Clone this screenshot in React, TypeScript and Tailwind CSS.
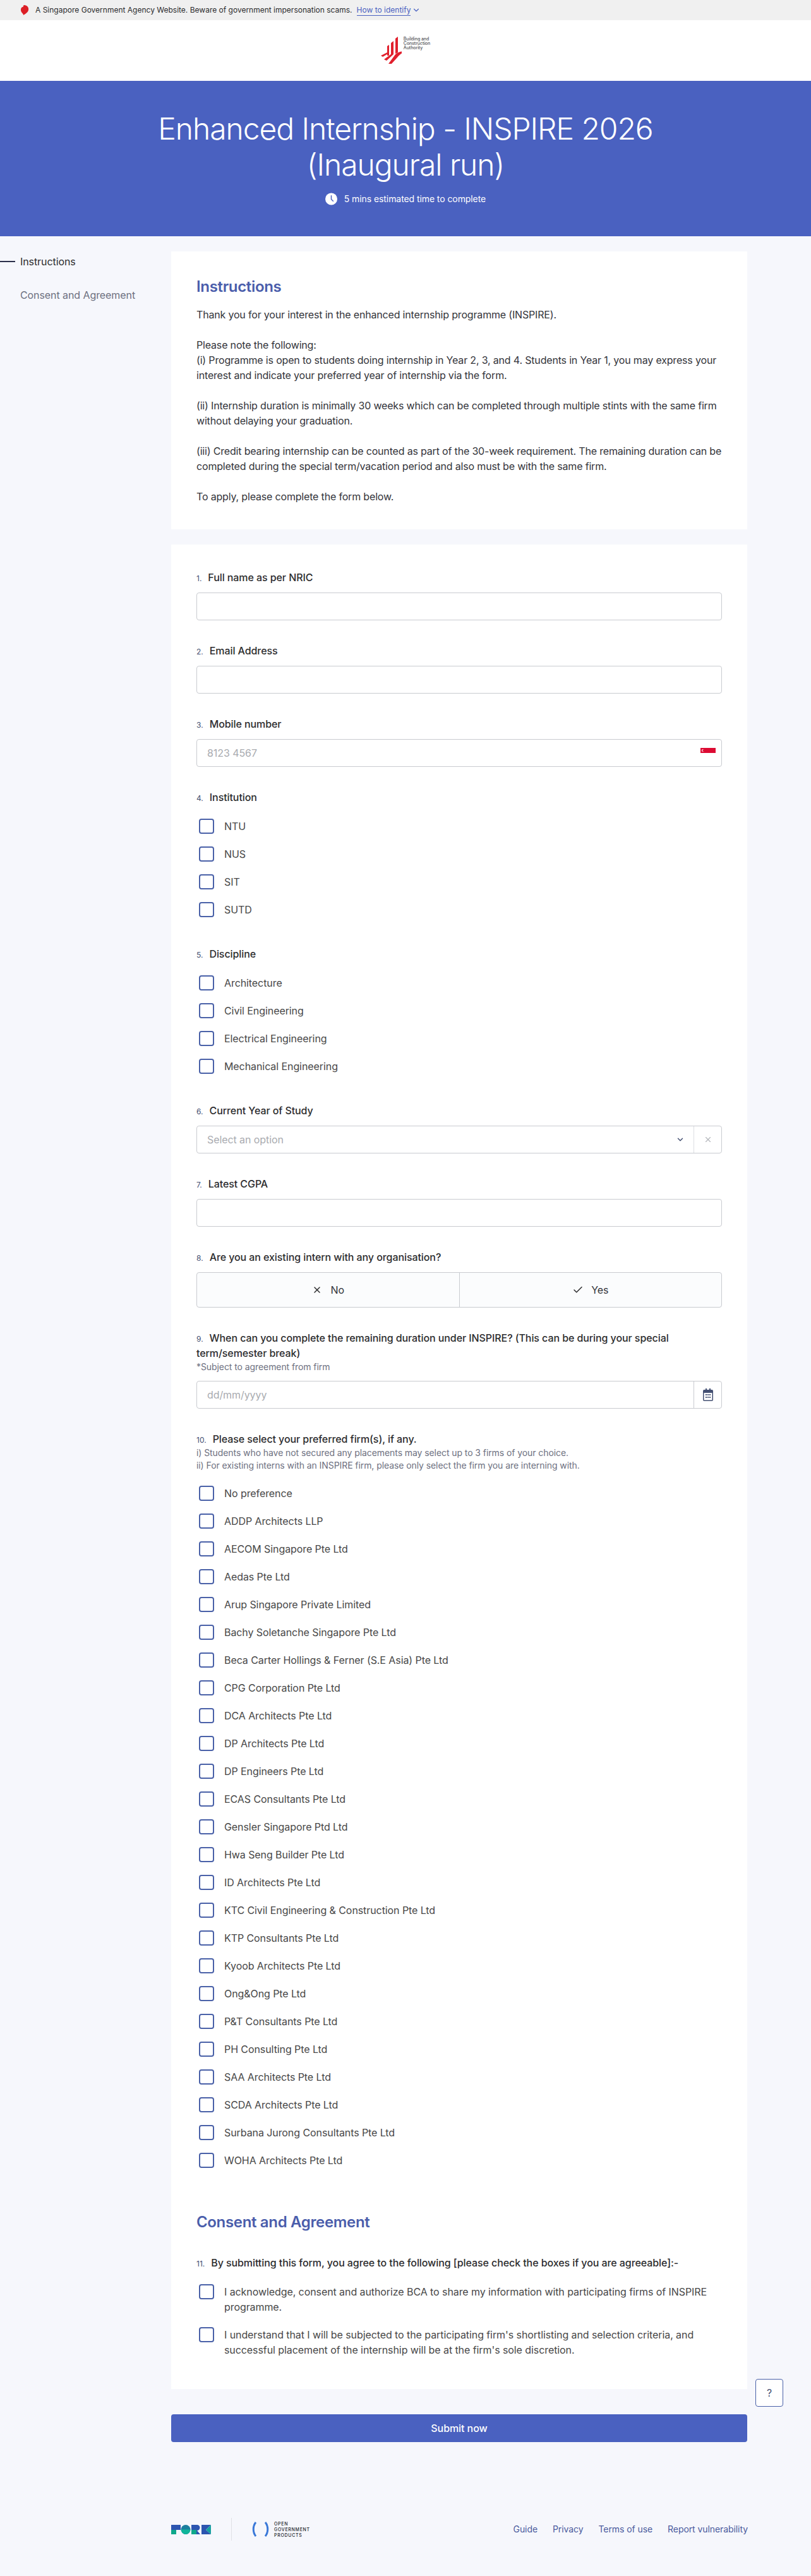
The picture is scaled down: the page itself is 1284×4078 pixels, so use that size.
import { Check, ChevronDown, X } from 'lucide-react'

const institutions = ['NTU', 'NUS', 'SIT', 'SUTD']
const disciplines = ['Architecture', 'Civil Engineering', 'Electrical Engineering', 'Mechanical Engineering']
const firms = [
  'No preference',
  'ADDP Architects LLP',
  'AECOM Singapore Pte Ltd',
  'Aedas Pte Ltd',
  'Arup Singapore Private Limited',
  'Bachy Soletanche Singapore Pte Ltd',
  'Beca Carter Hollings & Ferner (S.E Asia) Pte Ltd',
  'CPG Corporation Pte Ltd',
  'DCA Architects Pte Ltd',
  'DP Architects Pte Ltd',
  'DP Engineers Pte Ltd',
  'ECAS Consultants Pte Ltd',
  'Gensler Singapore Ptd Ltd',
  'Hwa Seng Builder Pte Ltd',
  'ID Architects Pte Ltd',
  'KTC Civil Engineering & Construction Pte Ltd',
  'KTP Consultants Pte Ltd',
  'Kyoob Architects Pte Ltd',
  'Ong&Ong Pte Ltd',
  'P&T Consultants Pte Ltd',
  'PH Consulting Pte Ltd',
  'SAA Architects Pte Ltd',
  'SCDA Architects Pte Ltd',
  'Surbana Jurong Consultants Pte Ltd',
  'WOHA Architects Pte Ltd',
]

const Label = ({ n, children }: { n: number; children: React.ReactNode }) => (
  <div className="text-base leading-6 font-medium text-[#2c2c2e]">
    <span className="mr-[10px] text-xs font-normal tracking-normal text-[#445072]">{n}.</span>
    {children}
  </div>
)

const Box = () => <span className="h-6 w-6 shrink-0 rounded-[4px] border-2 border-[#4a61a8] bg-white" />

const CheckRow = ({ text }: { text: string }) => (
  <div className="flex h-11 items-center gap-4 pl-1 text-base text-[#474747]">
    <Box />
    <span>{text}</span>
  </div>
)

const TextInput = () => <div className="h-11 rounded-[4px] border border-[#c9cbd0] bg-white" />

const BcaLogo = () => (
  <div className="flex items-start">
    <svg width="33" height="44" viewBox="0 0 33 44" className="-mt-[1px]">
      <path d="M10 16 L13 14 V31 H10 Z M16 11 L20 8 V29 H16 Z M23 4 L27 1 V26 L23 28 Z" fill="#e1202d" />
      <path d="M0 31 L10 26 L13 27 L3 33 Z M5 37 L17 28 L20 29 L9 39 Z" fill="#e1202d" />
      <path d="M12 44 L23 29 C26 26 32 24 41 23 C33 27 29 30 26 34 L16 45 Z" fill="#e1202d" />
    </svg>
    <div className="mt-[1px] ml-[3px] text-[7px] leading-[6.8px] font-medium text-[#55565a]">
      <div>Building and</div>
      <div>Construction</div>
      <div>Authority</div>
    </div>
  </div>
)

const FormLogo = () => (
  <svg width="63" height="15" viewBox="0 0 63 15" aria-label="Form">
    <rect x="0" y="0" width="15" height="8" fill="#2c55b0" />
    <rect x="0" y="8" width="8" height="7" fill="#0fa88b" />
    <circle cx="23" cy="7.5" r="7.5" fill="#1b7f9e" />
    <path d="M15.5 7.5 H30.5 A7.5 7.5 0 0 1 15.5 7.5 Z" fill="#0fb59a" />
    <path d="M32 0 H41 A4.5 4.5 0 0 1 41 9 L46 15 H32 Z" fill="#2c55b0" />
    <path d="M32 8 H40 V15 H32 Z" fill="#0fa88b" />
    <path d="M48 0 L63 0 L55 8 L63 15 H48 Z" fill="#2c55b0" />
    <path d="M63 0 V15 L55 8 Z" fill="#17a2a0" />
  </svg>
)

const App = () => {
  return (
    <div className="relative min-h-[4078px] bg-[#f6f7fc] font-['Inter',sans-serif] tracking-[-0.005em] text-[#2c2c2e]">
      <div className="flex h-8 items-center bg-[#f0f0f0] pl-8 text-xs tracking-normal text-[#2c2c2e]">
        <svg width="14" height="16" viewBox="0 0 14 16" className="mr-[10px]">
          <path d="M6 0 C11 0 14 4 13 8 C12 12 8 14 5 16 C5 13 1 12 1 8 C1 5 2 3 5 3 C4 2 5 1 6 0 Z" fill="#dc1f26" />
        </svg>
        <span>A Singapore Government Agency Website. Beware of government impersonation scams.</span>
        <a className="ml-[7px] border-b border-[#4a61c0] leading-[17px] text-[#4a61c0]">How to identify</a>
        <ChevronDown size={14} strokeWidth={2} className="ml-[2px] text-[#4a61c0]" />
      </div>

      <div className="flex h-24 justify-center bg-white pt-[26px]">
        <BcaLogo />
      </div>

      <div className="h-[246px] bg-[#4a61c0] pt-[47px] text-center text-white">
        <h1 className="mx-auto w-[800px] text-[48px] leading-[57px] font-light tracking-[-0.022em]">
          Enhanced Internship - INSPIRE 2026 (Inaugural run)
        </h1>
        <div className="mt-4 flex items-center justify-center gap-[11px] text-sm leading-5">
          <svg width="19" height="20" viewBox="0 0 20 20">
            <circle cx="10" cy="10" r="10" fill="#fff" />
            <path d="M10 4 V10.5 L13.5 14" stroke="#4a61c0" strokeWidth="1.6" fill="none" />
          </svg>
          <span>5 mins estimated time to complete</span>
        </div>
      </div>

      <div className="flex items-start pt-6">
        <div className="w-[271px] shrink-0">
          <div className="mt-[4px] flex items-center gap-2 text-base leading-6 text-[#2c2c2e]">
            <span className="h-[2px] w-6 bg-[#2b2f4a]" />
            Instructions
          </div>
          <div className="mt-[29px] pl-8 text-base leading-6 text-[#6d7080]">Consent and Agreement</div>
        </div>

        <div className="w-[912px] shrink-0">
          <section className="bg-white p-10 text-base leading-6 tracking-[-0.011em] text-[#33343a]">
            <h2 className="mb-4 text-2xl leading-8 font-semibold tracking-[-0.014em] text-[#4a5dab]">Instructions</h2>
            <p>Thank you for your interest in the enhanced internship programme (INSPIRE).</p>
            <br />
            <p>Please note the following:</p>
            <p>(i) Programme is open to students doing internship in Year 2, 3, and 4. Students in Year 1, you may express your interest and indicate your preferred year of internship via the form.</p>
            <br />
            <p>(ii) Internship duration is minimally 30 weeks which can be completed through multiple stints with the same firm without delaying your graduation.</p>
            <br />
            <p>(iii) Credit bearing internship can be counted as part of the 30-week requirement. The remaining duration can be completed during the special term/vacation period and also must be with the same firm.</p>
            <br />
            <p>To apply, please complete the form below.</p>
          </section>

          <section className="mt-6 flex flex-col bg-white p-10">
            <div className="mb-9">
              <Label n={1}>Full name as per NRIC</Label>
              <div className="mt-3"><TextInput /></div>
            </div>
            <div className="mb-9">
              <Label n={2}>Email Address</Label>
              <div className="mt-3"><TextInput /></div>
            </div>
            <div className="mb-9">
              <Label n={3}>Mobile number</Label>
              <div className="relative mt-3 flex h-11 items-center rounded-[4px] border border-[#c9cbd0] pl-4 text-base text-[#a9abb0]">
                8123 4567
                <svg width="24" height="8" viewBox="0 0 24 8" className="absolute top-[13px] right-[9px]">
                  <rect width="24" height="8" fill="#dc0a32" />
                  <circle cx="4" cy="4" r="2" fill="#fff" />
                  <circle cx="5" cy="4" r="1.8" fill="#dc0a32" />
                </svg>
              </div>
            </div>
            <div className="mb-9">
              <Label n={4}>Institution</Label>
              <div className="mt-3">
                {institutions.map((name) => <CheckRow key={name} text={name} />)}
              </div>
            </div>
            <div className="mb-9">
              <Label n={5}>Discipline</Label>
              <div className="mt-3">
                {disciplines.map((name) => <CheckRow key={name} text={name} />)}
              </div>
            </div>
            <div className="mb-9">
              <Label n={6}>Current Year of Study</Label>
              <div className="mt-3 flex h-11 items-center rounded-[4px] border border-[#c9cbd0] pl-4 text-base text-[#a9abb0]">
                <span className="flex-1">Select an option</span>
                <ChevronDown size={14} strokeWidth={2.5} className="mr-[14px] text-[#445072]" />
                <span className="flex h-full w-11 items-center justify-center border-l border-[#dcdee2]">
                  <X size={14} className="text-[#b4b6bb]" />
                </span>
              </div>
            </div>
            <div className="mb-9">
              <Label n={7}>Latest CGPA</Label>
              <div className="mt-3"><TextInput /></div>
            </div>
            <div className="mb-9">
              <Label n={8}>Are you an existing intern with any organisation?</Label>
              <div className="mt-3 flex h-14 rounded-[4px] border border-[#c9cbd0] bg-[#fbfcfd] text-base text-[#33343a]">
                <div className="flex flex-1 items-center justify-center gap-[14px] border-r border-[#c9cbd0]">
                  <X size={16} strokeWidth={2.2} className="text-[#2c2c2e]" />
                  No
                </div>
                <div className="flex flex-1 items-center justify-center gap-[12px]">
                  <Check size={18} strokeWidth={2} className="text-[#2c2c2e]" />
                  Yes
                </div>
              </div>
            </div>
            <div className="mb-9">
              <Label n={9}>When can you complete the remaining duration under INSPIRE? (This can be during your special term/semester break)</Label>
              <div className="text-sm leading-5 text-[#6d7080]">*Subject to agreement from firm</div>
              <div className="mt-3 flex h-11 items-center rounded-[4px] border border-[#c9cbd0] pl-4 text-base text-[#a9abb0]">
                <span className="flex-1">dd/mm/yyyy</span>
                <span className="flex h-full w-11 items-center justify-center border-l border-[#c9cbd0]">
                  <svg width="16" height="20" viewBox="0 0 16 20" fill="#445072">
                    <path d="M4 0 H6 V2 H10 V0 H12 V2 H14 A2 2 0 0 1 16 4 V18 A2 2 0 0 1 14 20 H2 A2 2 0 0 1 0 18 V4 A2 2 0 0 1 2 2 H4 Z M1.5 7 V18 A.5 .5 0 0 0 2 18.5 H14 A.5 .5 0 0 0 14.5 18 V7 Z" />
                    <rect x="4" y="9" width="2" height="2" />
                    <rect x="7" y="9" width="2" height="2" />
                    <rect x="10" y="9" width="2" height="2" />
                    <rect x="4" y="13" width="2" height="2" />
                    <rect x="7" y="13" width="2" height="2" />
                    <rect x="10" y="13" width="2" height="2" />
                  </svg>
                </span>
              </div>
            </div>
            <div>
              <Label n={10}>Please select your preferred firm(s), if any.</Label>
              <div className="text-sm leading-5 text-[#6d7080]">
                <div>i) Students who have not secured any placements may select up to 3 firms of your choice.</div>
                <div>ii) For existing interns with an INSPIRE firm, please only select the firm you are interning with.</div>
              </div>
              <div className="mt-3">
                {firms.map((name) => <CheckRow key={name} text={name} />)}
              </div>
            </div>

            <h2 className="mt-[60px] mb-9 text-2xl leading-8 font-semibold tracking-[-0.014em] text-[#4a5dab]">Consent and Agreement</h2>
            <Label n={11}>By submitting this form, you agree to the following [please check the boxes if you are agreeable]:-</Label>
            <div className="mt-3 text-base leading-6 text-[#474747]">
              <div className="flex gap-4 py-[10px] pl-1">
                <Box />
                <span>I acknowledge, consent and authorize BCA to share my information with participating firms of INSPIRE programme.</span>
              </div>
              <div className="flex gap-4 py-[10px] pl-1">
                <Box />
                <span>I understand that I will be subjected to the participating firm's shortlisting and selection criteria, and successful placement of the internship will be at the firm's sole discretion.</span>
              </div>
            </div>
          </section>

          <button className="mt-10 flex h-11 w-full items-center justify-center rounded-[4px] bg-[#4a61c0] text-base font-medium text-white">
            Submit now
          </button>
        </div>
      </div>

      <div className="absolute top-[3766px] left-[1196px] flex h-11 w-11 items-center justify-center rounded-[4px] border border-[#4a61a8] bg-white text-base text-[#445072]">
        ?
      </div>

      <footer className="mt-[120px] ml-[271px] flex w-[913px] items-center justify-between">
        <div className="flex items-center">
          <FormLogo />
          <span className="ml-8 h-9 w-px bg-[#dfe1e6]" />
          <svg width="27" height="24" viewBox="0 0 27 24" className="ml-8">
            <path d="M6 1 C1 7 1 17 6 23" stroke="#3a78d8" strokeWidth="3" fill="none" />
            <path d="M21 1 C26 7 26 17 21 23" stroke="#3a78d8" strokeWidth="3" fill="none" />
          </svg>
          <div className="ml-2 text-[7px] leading-[9px] font-medium tracking-[0.1em] text-[#23252b]">
            <div>OPEN</div>
            <div>GOVERNMENT</div>
            <div>PRODUCTS</div>
          </div>
        </div>
        <div className="flex gap-6 text-sm leading-5 text-[#4a5a9c]">
          <a href="#">Guide</a>
          <a href="#">Privacy</a>
          <a href="#">Terms of use</a>
          <a href="#">Report vulnerability</a>
        </div>
      </footer>
    </div>
  )
}

export default App
